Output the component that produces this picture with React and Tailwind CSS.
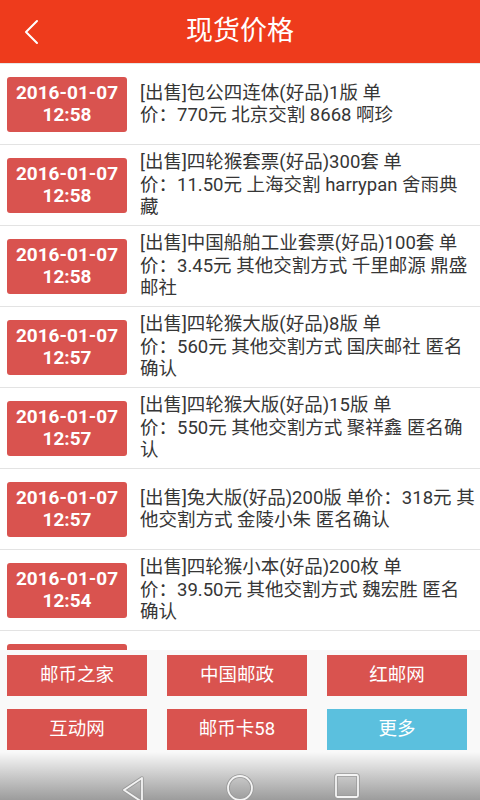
import React from "react";

const rows = [
  { date: "2016-01-07", time: "12:58", lines: ["[出售]包公四连体(好品)1版 单", "价：770元 北京交割 8668 啊珍"] },
  { date: "2016-01-07", time: "12:58", lines: ["[出售]四轮猴套票(好品)300套 单", "价：11.50元 上海交割 harrypan 舍雨典", "藏"] },
  { date: "2016-01-07", time: "12:58", lines: ["[出售]中国船舶工业套票(好品)100套 单", "价：3.45元 其他交割方式 千里邮源 鼎盛", "邮社"] },
  { date: "2016-01-07", time: "12:57", lines: ["[出售]四轮猴大版(好品)8版 单", "价：560元 其他交割方式 国庆邮社 匿名", "确认"] },
  { date: "2016-01-07", time: "12:57", lines: ["[出售]四轮猴大版(好品)15版 单", "价：550元 其他交割方式 聚祥鑫 匿名确", "认"] },
  { date: "2016-01-07", time: "12:57", lines: ["[出售]兔大版(好品)200版 单价：318元 其", "他交割方式 金陵小朱 匿名确认"] },
  { date: "2016-01-07", time: "12:54", lines: ["[出售]四轮猴小本(好品)200枚 单", "价：39.50元 其他交割方式 魏宏胜 匿名", "确认"] },
];

const links = [
  { label: "邮币之家", blue: false },
  { label: "中国邮政", blue: false },
  { label: "红邮网", blue: false },
  { label: "互动网", blue: false },
  { label: "邮币卡58", blue: false },
  { label: "更多", blue: true },
];

export default function App() {
  return (
    <div
      className="w-[480px] h-[800px] flex flex-col overflow-hidden bg-white"
      style={{ fontFamily: "Roboto, 'Noto Sans CJK SC', sans-serif" }}
    >
      <header className="h-16 shrink-0 bg-[#ee3b1c] flex items-center relative border-b border-[#e6e6e6]">
        <ChevronIcon className="absolute left-[24px] top-[19px] w-[16px] h-[26px]" />
        <h1 className="flex-1 text-center text-white text-[27px] leading-none">现货价格</h1>
      </header>

      <div className="h-[586px] shrink-0 overflow-hidden">
        {rows.map((row, i) => (
          <div key={i} className="flex items-center h-[81px] pl-[7px] border-b border-[#e3e3e3]">
            <div className="w-[120px] h-[55px] shrink-0 rounded-[3px] bg-[#d9534f] text-white font-bold text-[19px] leading-[22px] flex flex-col items-center justify-center">
              <span>{row.date}</span>
              <span>{row.time}</span>
            </div>
            <div className="ml-[13px] text-[#363636] text-[18.5px] leading-[22.5px]">
              {row.lines.map((line, j) => (
                <div key={j} className="whitespace-nowrap">{line}</div>
              ))}
            </div>
          </div>
        ))}
        {/* next row, only its badge top peeks out above the link panel */}
        <div className="flex h-[81px] pl-[7px] pt-[13px]">
          <div className="w-[120px] h-[55px] rounded-[3px] bg-[#d9534f]" />
        </div>
      </div>

      <div className="flex-1 bg-[#f9f9f9] flex flex-col">
        <div className="grid grid-cols-[140px_140px_140px] gap-x-5 gap-y-[13px] pl-[7px] pt-[5px]">
          {links.map((l) => (
            <button
              key={l.label}
              className={
                "h-[41px] text-white text-[18.5px] flex items-center justify-center " +
                (l.blue ? "bg-[#5bc0de]" : "bg-[#d9534f]")
              }
            >
              {l.label}
            </button>
          ))}
        </div>
        <nav className="mt-auto h-[48px] bg-gradient-to-b from-[#f9f9f9] to-[#9c9c9c] flex items-end justify-center">
          <div className="w-[107px] flex justify-center">
            <svg width="26" height="28" viewBox="0 0 26 28" className="mb-[-4px]">
              <path d="M22 2 L4 14 L22 26 Z" fill="none" stroke="#9a9a9a" strokeWidth="3.5" strokeLinejoin="round" />
              <path d="M22 2 L4 14 L22 26 Z" fill="none" stroke="#f4f4f4" strokeWidth="1.8" strokeLinejoin="round" />
            </svg>
          </div>
          <div className="w-[107px] flex justify-center">
            <svg width="28" height="28" viewBox="0 0 28 28" className="mb-[-2px]">
              <circle cx="14" cy="14" r="12" fill="none" stroke="#9a9a9a" strokeWidth="3.5" />
              <circle cx="14" cy="14" r="12" fill="none" stroke="#f4f4f4" strokeWidth="1.8" />
            </svg>
          </div>
          <div className="w-[107px] flex justify-center">
            <svg width="26" height="26" viewBox="0 0 26 26" className="mb-[1px]">
              <rect x="2" y="2" width="22" height="22" rx="1.5" fill="none" stroke="#9a9a9a" strokeWidth="3.5" />
              <rect x="2" y="2" width="22" height="22" rx="1.5" fill="none" stroke="#f4f4f4" strokeWidth="1.8" />
            </svg>
          </div>
        </nav>
      </div>
    </div>
  );
}

function ChevronIcon(props) {
  return (
    <svg {...props} viewBox="0 0 16 26" fill="none" stroke="white" strokeWidth="2" strokeLinecap="round" strokeLinejoin="round">
      <path d="M13 2 L2 13 L13 24" />
    </svg>
  );
}
